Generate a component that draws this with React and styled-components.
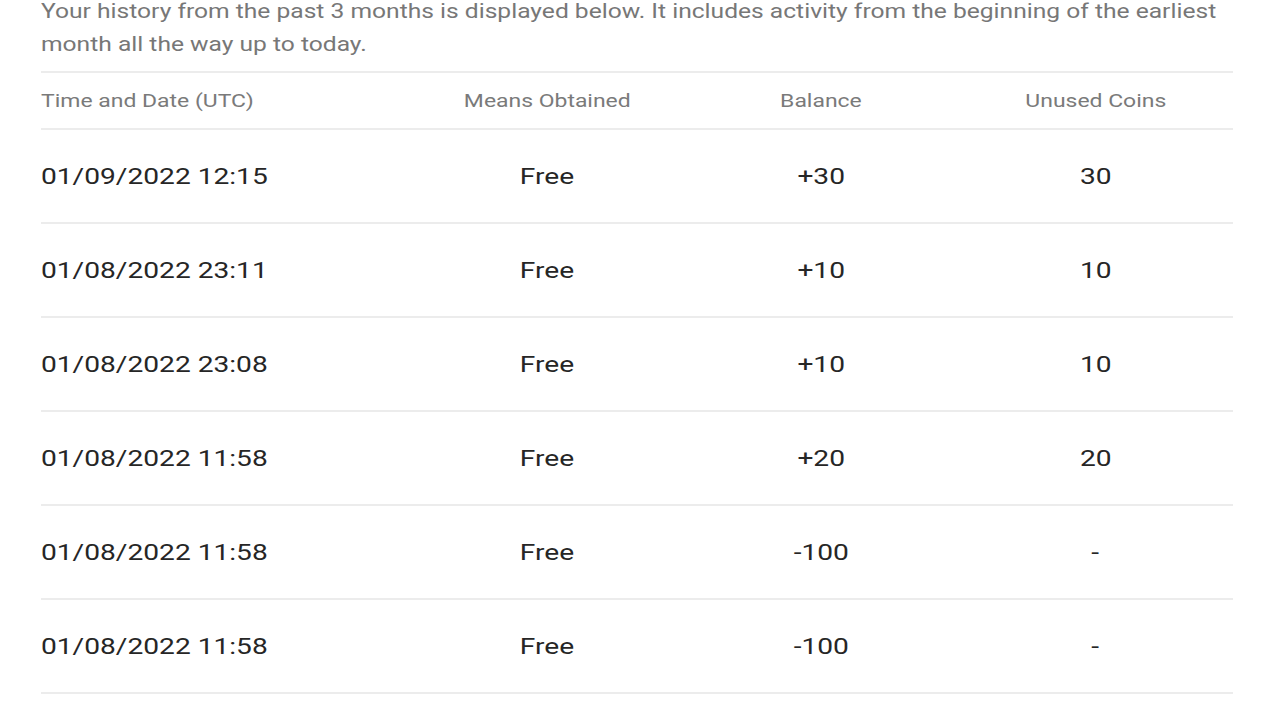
import React from 'react';
import styled, { createGlobalStyle } from 'styled-components';

const GlobalStyle = createGlobalStyle`
  body {
    margin: 0;
    background: #ffffff;
    font-family: Roboto, 'Noto Sans', Arial, sans-serif;
  }
`;

// the source screenshot is stretched sideways, text is widened to match
const STRETCH = 1.24;
const INTRO_STRETCH = 1.23;

const rows = [
  { date: '01/09/2022 12:15', means: 'Free', balance: '+30', unused: '30' },
  { date: '01/08/2022 23:11', means: 'Free', balance: '+10', unused: '10' },
  { date: '01/08/2022 23:08', means: 'Free', balance: '+10', unused: '10' },
  { date: '01/08/2022 11:58', means: 'Free', balance: '+20', unused: '20' },
  { date: '01/08/2022 11:58', means: 'Free', balance: '-100', unused: '-' },
  { date: '01/08/2022 11:58', means: 'Free', balance: '-100', unused: '-' }
];

export default function App() {
  return (
    <>
      <GlobalStyle />
      <Page>
        <Intro>
          Your history from the past 3 months is displayed below. It includes activity from the beginning of the earliest
          month all the way up to today.
        </Intro>
        <Table>
          <HeadRow>
            <Cell $left><Text $left>Time and Date (UTC)</Text></Cell>
            <Cell><Text>Means Obtained</Text></Cell>
            <Cell><Text>Balance</Text></Cell>
            <Cell><Text>Unused Coins</Text></Cell>
          </HeadRow>
          {rows.map((row, index) => (
            <BodyRow key={index}>
              <Cell $left><Text $left>{row.date}</Text></Cell>
              <Cell><Text>{row.means}</Text></Cell>
              <Cell><Text>{row.balance}</Text></Cell>
              <Cell><Text>{row.unused}</Text></Cell>
            </BodyRow>
          ))}
        </Table>
      </Page>
    </>
  );
}

const Page = styled.div`
  padding: 0 47px 0 41px;
  overflow: hidden;
`;

const Intro = styled.p`
  margin: -5px 0 0;
  width: ${Math.floor(1192 / INTRO_STRETCH)}px;
  font-size: 20px;
  line-height: 33px;
  color: #777777;
  padding-bottom: 10px;
  transform: scaleX(${INTRO_STRETCH});
  transform-origin: left top;
`;

const Table = styled.div`
  border-top: 2px solid #ececec;
`;

const Row = styled.div`
  display: grid;
  grid-template-columns: 369px 274px 274px 275px;
  align-items: center;
  border-bottom: 2px solid #ececec;
`;

const HeadRow = styled(Row)`
  height: 55px;
  font-size: 18.5px;
  color: #7a7a7a;
`;

const BodyRow = styled(Row)`
  height: 92px;
  font-size: 22.7px;
  color: #262626;
`;

const Cell = styled.div`
  text-align: ${(p) => (p.$left ? 'left' : 'center')};
  white-space: nowrap;
`;

const Text = styled.span`
  display: inline-block;
  transform: scaleX(${STRETCH});
  transform-origin: ${(p) => (p.$left ? 'left' : 'center')} center;
`;
